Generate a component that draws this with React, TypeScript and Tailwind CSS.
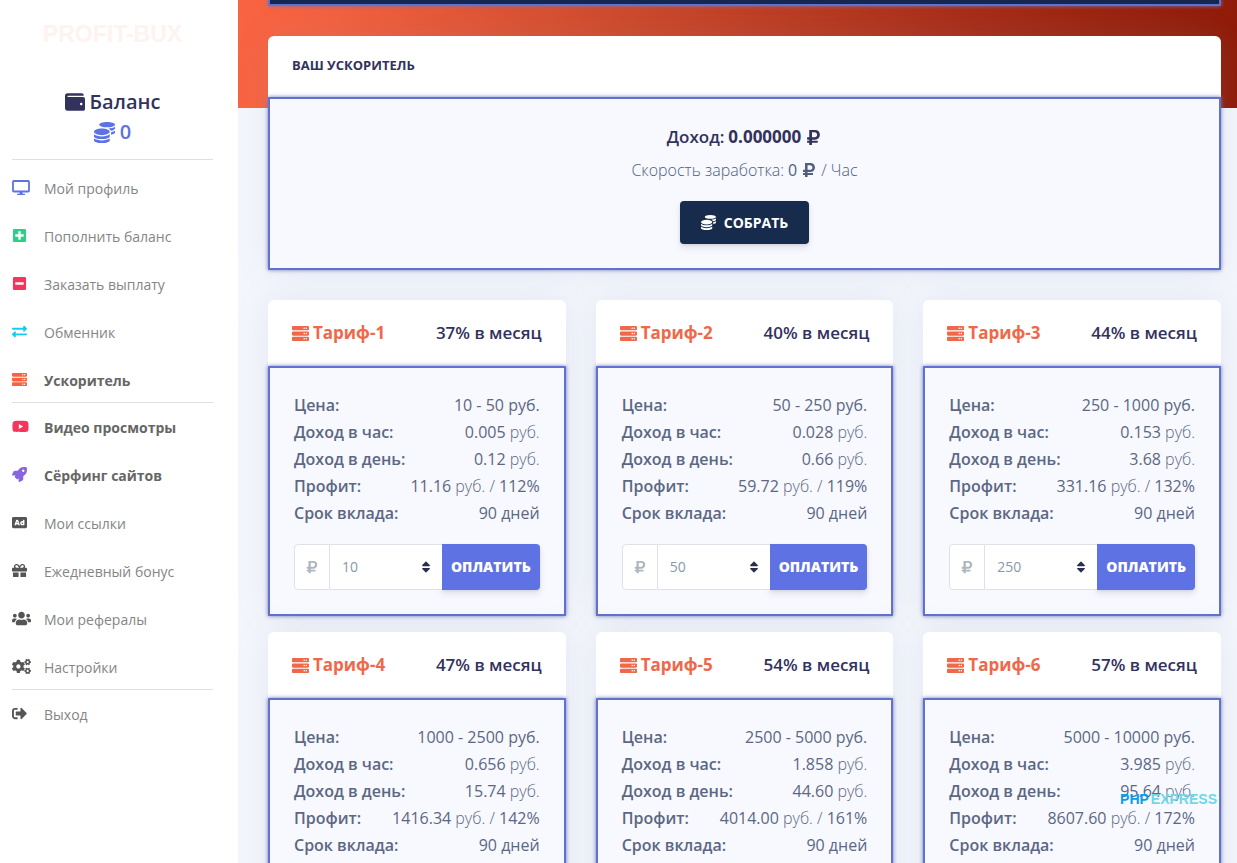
import { useState } from "react";
import type { ReactNode } from "react";
import {
  FaAd,
  FaCogs,
  FaCoins,
  FaExchangeAlt,
  FaGift,
  FaMinusSquare,
  FaPlusSquare,
  FaRocket,
  FaRubleSign,
  FaServer,
  FaSignOutAlt,
  FaSort,
  FaUsers,
  FaWallet,
  FaYoutube,
} from "react-icons/fa";

type MenuItem = {
  label: string;
  icon: ReactNode;
  bold?: boolean;
};

type Tariff = {
  id: number;
  percent: string;
  price: string;
  hour: string;
  day: string;
  profit: string;
  total: string;
  min: string;
};

function MonitorIcon() {
  return (
    <svg width="18" height="16" viewBox="0 0 18 16" fill="none">
      <rect x="1" y="1" width="16" height="10.5" rx="0.8" stroke="#5e72e4" strokeWidth="1.8" />
      <path d="M7.5 11.5h3v2.2H13V15H5v-1.3h2.5z" fill="#5e72e4" />
    </svg>
  );
}

const menuGroups: MenuItem[][] = [
  [
    { label: "Мой профиль", icon: <MonitorIcon /> },
    { label: "Пополнить баланс", icon: <FaPlusSquare size={15} className="text-[#2dce89]" /> },
    { label: "Заказать выплату", icon: <FaMinusSquare size={15} className="text-[#f5365c]" /> },
    { label: "Обменник", icon: <FaExchangeAlt size={15} className="text-[#11cdef]" /> },
    { label: "Ускоритель", icon: <FaServer size={15} className="text-[#fb6340]" />, bold: true },
  ],
  [
    { label: "Видео просмотры", icon: <FaYoutube size={17} className="text-[#f5365c]" />, bold: true },
    { label: "Сёрфинг сайтов", icon: <FaRocket size={15} className="text-[#8965e0]" />, bold: true },
    { label: "Мои ссылки", icon: <FaAd size={15} /> },
    { label: "Ежедневный бонус", icon: <FaGift size={15} /> },
    { label: "Мои рефералы", icon: <FaUsers size={19} /> },
    { label: "Настройки", icon: <FaCogs size={19} /> },
  ],
  [{ label: "Выход", icon: <FaSignOutAlt size={15} /> }],
];

const tariffs: Tariff[] = [
  { id: 1, percent: "37%", price: "10 - 50", hour: "0.005", day: "0.12", profit: "11.16", total: "112%", min: "10" },
  { id: 2, percent: "40%", price: "50 - 250", hour: "0.028", day: "0.66", profit: "59.72", total: "119%", min: "50" },
  { id: 3, percent: "44%", price: "250 - 1000", hour: "0.153", day: "3.68", profit: "331.16", total: "132%", min: "250" },
  { id: 4, percent: "47%", price: "1000 - 2500", hour: "0.656", day: "15.74", profit: "1416.34", total: "142%", min: "1000" },
  { id: 5, percent: "54%", price: "2500 - 5000", hour: "1.858", day: "44.60", profit: "4014.00", total: "161%", min: "2500" },
  { id: 6, percent: "57%", price: "5000 - 10000", hour: "3.985", day: "95.64", profit: "8607.60", total: "172%", min: "5000" },
];

const bodyClasses =
  "border-2 border-[#6270cf] bg-[#f7f9fe] shadow-[0_0_4px_#6e79b8]";
const cardClasses = "rounded-md bg-white shadow-[0_0_32px_rgba(136,152,170,0.15)]";

function Sidebar() {
  return (
    <aside className="w-[238px] shrink-0 bg-white pr-[25px] pl-3">
      <div className="flex h-[68px] items-center justify-center font-['Liberation_Sans',sans-serif] text-[23px] font-bold text-[#fdf3f0]">
        PROFIT-BUX
      </div>

      <div className="border-b border-[#dfdfe2] pt-[19px] pb-3 text-center text-xl leading-[30px] font-semibold">
        <div className="flex items-center justify-center gap-[5px] text-[#32325d]">
          <FaWallet size={20} />
          Баланс
        </div>
        <div className="flex items-center justify-center gap-[5px] text-[#5e72e4]">
          <FaCoins size={21} />0
        </div>
      </div>

      <nav className="pt-[18px]">
        {menuGroups.map((group, i) => (
          <ul
            key={i}
            className="mb-[14px] flex flex-col gap-[26px] border-b border-[#dfdfe2] pb-[10px] last:border-0"
          >
            {group.map((item) => (
              <li key={item.label}>
                <a
                  href="#"
                  className={`flex h-[22px] items-center text-sm ${
                    item.bold ? "font-bold text-[#666666]" : "text-[#858585]"
                  }`}
                >
                  <span className="w-8 pb-[3px] text-[#555555]">{item.icon}</span>
                  {item.label}
                </a>
              </li>
            ))}
          </ul>
        ))}
      </nav>
    </aside>
  );
}

function Row({ label, children }: { label: string; children: ReactNode }) {
  return (
    <div className="flex justify-between">
      <dt className="font-semibold">{label}</dt>
      <dd>{children}</dd>
    </div>
  );
}

function TariffCard({ tariff }: { tariff: Tariff }) {
  const [amount, setAmount] = useState(tariff.min);
  const unit = <span className="font-light">руб.</span>;

  return (
    <section className={cardClasses}>
      <header className="flex h-[66px] items-center justify-between px-6 text-[17px]">
        <h3 className="flex items-center gap-1 font-bold text-[#f0684a]">
          <FaServer size={17} />
          Тариф-{tariff.id}
        </h3>
        <span className="font-semibold text-[#32325d]">{tariff.percent} в месяц</span>
      </header>

      <div className={`p-6 ${bodyClasses}`}>
        <dl className="text-base leading-[27px] text-[#5c6783]">
          <Row label="Цена:">{tariff.price} руб.</Row>
          <Row label="Доход в час:">
            {tariff.hour} {unit}
          </Row>
          <Row label="Доход в день:">
            {tariff.day} {unit}
          </Row>
          <Row label="Профит:">
            {tariff.profit} {unit} <span className="font-light">/</span> {tariff.total}
          </Row>
          <Row label="Срок вклада:">90 дней</Row>
        </dl>

        <form className="mt-[17px] flex h-[46px]" onSubmit={(e) => e.preventDefault()}>
          <label
            htmlFor={`amount-${tariff.id}`}
            className="flex w-9 items-center justify-center rounded-l border border-[#dee2e6] bg-white text-[#adb5bd]"
          >
            <FaRubleSign size={14} />
          </label>
          <div className="relative flex min-w-0 flex-1 items-center">
            <select
              id={`amount-${tariff.id}`}
              value={amount}
              onChange={(e) => setAmount(e.target.value)}
              className="h-full w-full appearance-none border-y border-[#dee2e6] bg-white px-3 text-sm text-[#8898aa]"
            >
              <option value={tariff.min}>{tariff.min}</option>
            </select>
            <FaSort size={14} className="pointer-events-none absolute right-[9px] text-[#2b2f4a]" />
          </div>
          <button
            type="submit"
            className="rounded-r bg-[#5e72e4] px-[9px] text-sm font-extrabold text-white shadow-[0_4px_6px_rgba(50,50,93,0.11),0_1px_3px_rgba(0,0,0,0.08)]"
          >
            ОПЛАТИТЬ
          </button>
        </form>
      </div>
    </section>
  );
}

export default function App() {
  return (
    <div className="relative flex h-screen overflow-hidden bg-[#f4f6fd] font-['Open_Sans',sans-serif]">
      <Sidebar />

      <main className="min-w-0 flex-1 bg-[linear-gradient(87deg,#f96442_0%,#f3603f_10%,#cf4a2c_38%,#a52b17_75%,#8f1b08_100%)] bg-[length:100%_108px] bg-no-repeat pr-4 pl-[30px]">
        {/* Lower edge of the banner that scrolled away */}
        <div className="mb-[30px] h-[6px] border-2 border-t-0 border-[#6270cf] bg-[#142750] shadow-[0_0_4px_#6e79b8]" />

        <section className={cardClasses}>
          <h2 className="flex h-[61px] items-center px-6 pb-[2px] text-[13px] font-bold text-[#32325d]">
            ВАШ УСКОРИТЕЛЬ
          </h2>
          <div className={`flex flex-col items-center p-6 ${bodyClasses}`}>
            <p className="flex items-center gap-1 text-[17px] leading-7 font-semibold text-[#32325d]">
              Доход: <span className="font-bold">0.000000</span>
              <FaRubleSign size={17} />
            </p>
            <p className="mt-[7px] flex items-center gap-1 text-base leading-6 font-light text-[#525f7f]">
              Скорость заработка: <span className="font-normal">0</span>
              <FaRubleSign size={16} />/ Час
            </p>
            <button
              type="button"
              className="mt-[19px] flex h-[43px] items-center gap-2 rounded bg-[#172b4d] px-[21px] text-sm font-bold text-white shadow-[0_4px_6px_rgba(50,50,93,0.11),0_1px_3px_rgba(0,0,0,0.08)]"
            >
              <FaCoins size={15} />
              СОБРАТЬ
            </button>
          </div>
        </section>

        <div className="mt-[30px] grid grid-cols-3 gap-x-[30px] gap-y-4">
          {tariffs.map((tariff) => (
            <TariffCard key={tariff.id} tariff={tariff} />
          ))}
        </div>
      </main>

      <div className="absolute right-5 bottom-[39px] flex h-[50px] items-center gap-[2px] font-['Liberation_Sans',sans-serif] text-sm font-bold">
        <span className="text-[#069eee]">PHP</span>
        <span className="text-[#6fd7e8]">EXPRESS</span>
      </div>
    </div>
  );
}
